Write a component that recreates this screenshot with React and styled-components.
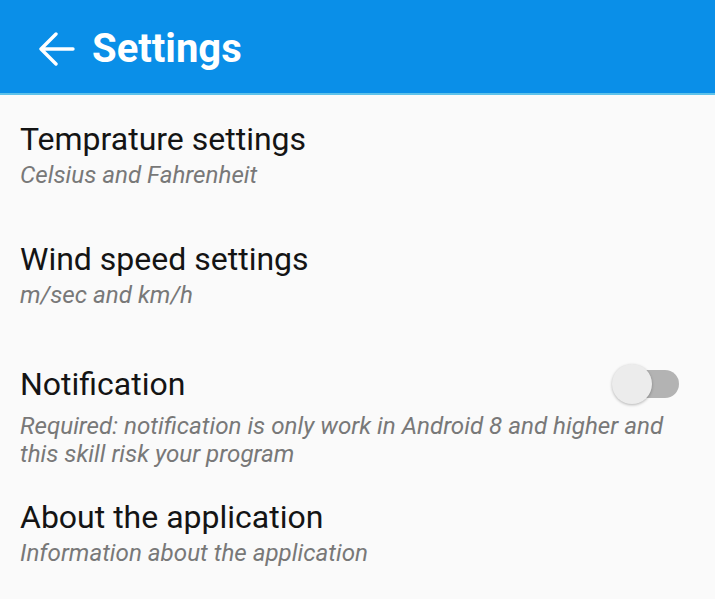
import React, { useState } from "react";
import styled, { createGlobalStyle } from "styled-components";

const Global = createGlobalStyle`
  html, body { margin: 0; padding: 0; background: #fafafa; }
  body { font-family: Roboto, "Noto Sans", sans-serif; }
`;

const Page = styled.div`
  width: 715px;
  height: 599px;
  background: #fafafa;
  overflow: hidden;
`;

const AppBar = styled.header`
  height: 95px;
  background: #0a8fe8;
  border-bottom: 2px solid #5ec2ea;
  box-sizing: border-box;
  display: flex;
  align-items: center;
  padding: 4px 0 0 38px;
  gap: 16px;
`;

const BackButton = styled.button`
  border: 0;
  background: none;
  padding: 0;
  display: flex;
  width: 38px;
  height: 38px;
  align-items: center;
  justify-content: center;
  cursor: pointer;
`;

const Title = styled.h1`
  margin: 0;
  color: #ffffff;
  font-size: 40px;
  line-height: 48px;
  font-weight: 700;
`;

const List = styled.div`
  display: flex;
  flex-direction: column;
`;

const Item = styled.div`
  display: flex;
  flex-direction: column;
  padding: ${(p) => p.$pt}px 36px 0 20px;
`;

const TitleRow = styled.div`
  display: flex;
  align-items: center;
  justify-content: space-between;
  margin-bottom: ${(p) => p.$gap}px;
`;

const ItemTitle = styled.div`
  color: #141414;
  font-size: 32px;
  line-height: 40px;
`;

const ItemSub = styled.div`
  color: #787878;
  font-size: 24.2px;
  font-style: italic;
  line-height: 28px;
`;

const SwitchTrack = styled.button`
  position: relative;
  width: 54px;
  height: 28px;
  border: 0;
  padding: 0;
  border-radius: 14px;
  background: ${(p) => (p.$on ? "#7cc4f2" : "#b3b3b3")};
  cursor: pointer;
`;

const SwitchThumb = styled.span`
  position: absolute;
  top: -6px;
  left: ${(p) => (p.$on ? "26px" : "-13px")};
  width: 40px;
  height: 40px;
  border-radius: 50%;
  background: ${(p) => (p.$on ? "#0a8fe8" : "#ececec")};
  box-shadow: 0 1px 3px rgba(0, 0, 0, 0.28);
`;

const items = [
  { title: "Temprature settings", sub: ["Celsius and Fahrenheit"], pt: 24, gap: 2 },
  { title: "Wind speed settings", sub: ["m/sec and km/h"], pt: 50, gap: 2 },
  {
    title: "Notification",
    sub: [
      "Required: notification is only work in Android 8 and higher and",
      "this skill risk your program",
    ],
    pt: 55,
    gap: 8,
    toggle: true,
  },
  { title: "About the application", sub: ["Information about the application"], pt: 29, gap: 2 },
];

export default function App() {
  const [on, setOn] = useState(false);
  return (
    <Page>
      <Global />
      <AppBar>
        <BackButton aria-label="Back">
          <svg width="36" height="34" viewBox="0 0 36 34" fill="none" stroke="#fff" strokeWidth="3.4" strokeLinecap="round" strokeLinejoin="round">
            <path d="M34 17H3M17 2L2 17l15 15" />
          </svg>
        </BackButton>
        <Title>Settings</Title>
      </AppBar>
      <List>
        {items.map((it) => (
          <Item key={it.title} $pt={it.pt}>
            <TitleRow $gap={it.gap}>
              <ItemTitle>{it.title}</ItemTitle>
              {it.toggle && (
                <SwitchTrack $on={on} onClick={() => setOn(!on)} aria-label="Toggle notification">
                  <SwitchThumb $on={on} />
                </SwitchTrack>
              )}
            </TitleRow>
            {it.sub.map((s) => (
              <ItemSub key={s}>{s}</ItemSub>
            ))}
          </Item>
        ))}
      </List>
    </Page>
  );
}
